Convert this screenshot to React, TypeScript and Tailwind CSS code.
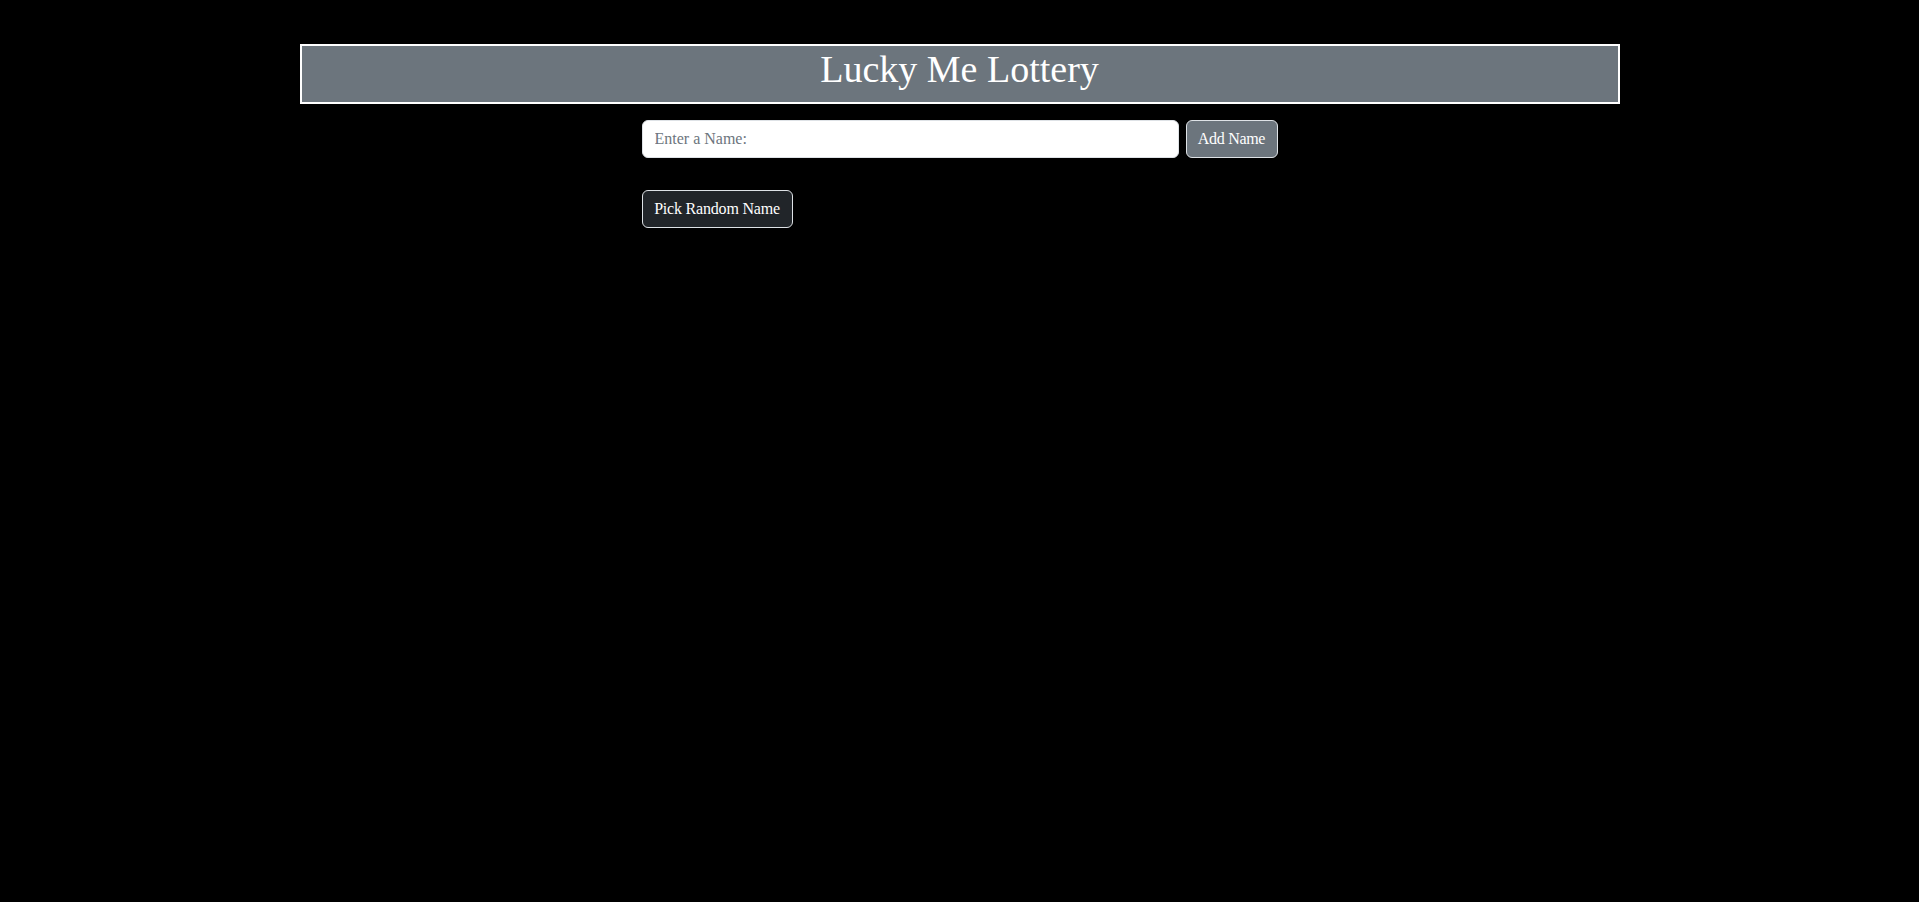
export default function App() {
  return (
    <div className="min-h-screen bg-black font-['Liberation_Serif',serif] text-white">
      <div className="mx-auto w-[1320px] pt-[44px]">
        {/* Title bar */}
        <header className="flex h-[60px] items-center justify-center border-2 border-white bg-[#6c757d] pb-[10px]">
          <h1 className="text-[38px] leading-none">Lucky Me Lottery</h1>
        </header>

        <div className="ml-[342px] mt-[16px] flex flex-col items-start">
          <div className="flex items-center gap-[7px]">
            <input
              type="text"
              placeholder="Enter a Name:"
              className="h-[38px] w-[537px] rounded-[6px] border border-[#dee2e6] bg-white px-[12px] text-[16px] text-[#212529] outline-none placeholder:text-[#6c757d]"
            />
            <button className="h-[38px] w-[92px] rounded-[6px] border border-[#dee2e6] bg-[#6c757d] text-[16px] tracking-[-0.3px] text-white">
              Add Name
            </button>
          </div>

          <button className="mt-[32px] h-[38px] w-[151px] rounded-[6px] border border-[#dee2e6] bg-[#212529] text-[16px] tracking-[-0.2px] text-white">
            Pick Random Name
          </button>
        </div>
      </div>
    </div>
  );
}
